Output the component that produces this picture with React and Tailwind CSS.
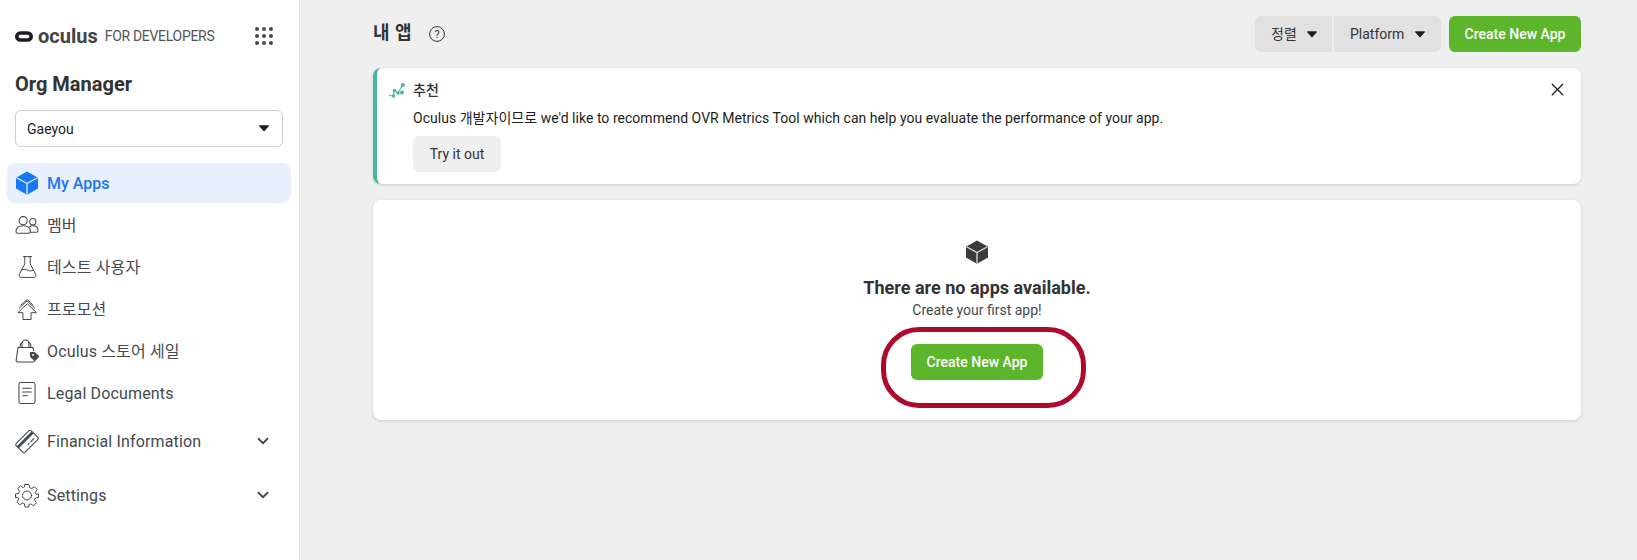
import React from "react";
import { ChevronDown, X } from "lucide-react";

const Caret = ({ className = "" }) => (
  <svg width="12" height="7" viewBox="0 0 12 7" className={className}>
    <path d="M1 .9C1 .5 1.300.3 1.600.3h8.800c.3 0 .6.2.6.6 0 .2-.1.3-.2.4L6.500 6.100c-.3.3-.7.3-1 0L1.200 1.300C1.100 1.200 1 1.100 1 .9z" fill="#1c1e21" />
  </svg>
);

const Cube = ({ color, line = "#fff", size = 24 }) => (
  <svg width={size} height={size} viewBox="0 0 24 24">
    <path d="M12 .5 22.600 6.400c.3.2.4.4.4.7v10c0 .3-.1.5-.4.7L12 23.800 1.400 17.800c-.3-.2-.4-.4-.4-.7v-10c0-.3.1-.5.4-.7z" fill={color} />
    <path d="M1.500 6.700 12 12.500l10.500-5.800M12 12.500v11" fill="none" stroke={line} strokeWidth="1.300" />
  </svg>
);

const stroke = { fill: "none", stroke: "#444950", strokeWidth: 1.1, strokeLinejoin: "round", strokeLinecap: "round" };

const Members = () => (
  <svg width="25" height="20" viewBox="0 0 25 20" {...stroke}>
    <circle cx="8.500" cy="5.500" r="4.200" />
    <path d="M1 17c0-4 3-6.200 7.500-6.200S16 13 16 17c0 1-.8 1.600-1.800 1.600H2.800C1.800 18.600 1 18 1 17z" />
    <circle cx="18.500" cy="6.500" r="3.200" />
    <path d="M15.500 11.500c.9-.5 2-.8 3-.8 3.200 0 5.500 2 5.500 5 0 1.200-.8 1.800-1.800 1.800h-6" />
  </svg>
);

const Flask = () => (
  <svg width="19" height="24" viewBox="0 0 21 25" {...stroke}>
    <path d="M6 1h9M7.500 1v8L1.500 20.500C.6 22.500 1.600 24 3.500 24h14c1.900 0 2.900-1.500 2-3.500L13.500 9V1" />
    <path d="M4 16c2.500-1.500 4.500-1 6.500 0s4.500 1.200 6.500 0" />
  </svg>
);

const Promo = () => (
  <svg width="20" height="23" viewBox="0 0 22 24" {...stroke}>
    <path d="M11 6 1 15.500h5.500V23h9v-7.500H21z" />
    <path d="M2.500 10.500 11 2.500l8.500 8M4.500 7 11 1l6.500 6" />
  </svg>
);

const Bag = () => (
  <svg width="24" height="24" viewBox="0 0 24 24" {...stroke}>
    <path d="M3 8.500 1.200 21c-.1 1.200.5 2 1.600 2H18c1 0 1.600-.7 1.600-1.600l-.2-3M3 8.500h15l.5 3" />
    <path d="M7 8.500V5c0-2.400 1.500-4 3.500-4s3.500 1.600 3.500 4v3.500M5 8.500c0-3 1-4.500 2.500-5M16 8.500c0-3-.6-4.500-2-5" />
    <path d="M15.500 13.500h3.500l4.300 3.400c.3.300.3.700 0 1l-3 3.300c-.3.300-.7.300-1 0l-3.800-3.700z" fill="#444950" />
    <circle cx="18" cy="16" r=".9" fill="#fff" stroke="none" />
  </svg>
);

const Doc = () => (
  <svg width="18" height="24" viewBox="0 0 19 24" {...stroke}>
    <rect x="1" y="1" width="17" height="22" rx="2" />
    <path d="M5 7h9M5 11h9M5 15h5" />
  </svg>
);

const Card = () => (
  <svg width="25" height="25" viewBox="0 0 25 25" {...stroke}>
    <g transform="rotate(-45 12.500 12.500)">
      <rect x="1.500" y="6" width="22" height="13" rx="1.800" />
      <rect x="1.500" y="8.500" width="22" height="3" fill="#444950" stroke="none" />
      <path d="M15 15.500h5M11 15.500h1.500" />
    </g>
  </svg>
);

const Gear = () => (
  <svg width="25" height="25" viewBox="0 0 24 24" {...stroke} strokeWidth="1">
    <circle cx="12" cy="12" r="4.500" />
    <path d="M10 1h4l.7 3.200 1.900.8 2.800-1.800 2.800 2.800-1.800 2.800.8 1.900L23.500 10.500v3.500l-3.200.7-.8 1.900 1.800 2.800-2.800 2.800-2.800-1.800-1.900.8L13.900 23.500h-3.800l-.7-3.200-1.900-.8-2.800 1.800-2.800-2.800 1.800-2.800-.8-1.900L.5 14v-3.500l3.200-.7.800-1.900L2.700 5.100l2.800-2.800 2.800 1.800 1-.5z" />
  </svg>
);

const Metric = () => (
  <svg width="16" height="15" viewBox="0 0 16 15">
    <path d="M0 12.500 4 13l1.500-5L9 10l4.500-8" fill="none" stroke="#45b8a0" strokeWidth="1.100" />
    <circle cx="13.800" cy="2" r="2" fill="#45b8a0" />
    <circle cx="13" cy="9.500" r="2" fill="#45b8a0" />
    <circle cx="9" cy="10" r="1.800" fill="#45b8a0" />
    <circle cx="5.500" cy="7.500" r="1.800" fill="#45b8a0" />
    <circle cx="4.500" cy="13" r="1.700" fill="#45b8a0" />
  </svg>
);

const NavRow = ({ icon, label, className = "" }) => (
  <div className={`flex items-center h-[42px] pl-[8px] ${className}`}>
    <div className="w-[24px] flex justify-center shrink-0">{icon}</div>
    <span className="ml-[8px] mt-[2px] text-[16px] tracking-[0.15px] text-[#444950]">{label}</span>
  </div>
);

const GreenButton = () => (
  <button className="h-[36px] w-[132px] pt-[1px] rounded-[6px] bg-[#5cb52a] text-white text-[14px] font-medium">Create New App</button>
);

export default function App() {
  const dots = [0, 1, 2, 3, 4, 5, 6, 7, 8];

  return (
    <div className="flex h-[560px] bg-[#efefef] overflow-hidden font-['Roboto','Noto_Sans_CJK_KR',sans-serif] text-[#333]">
      <aside className="w-[300px] shrink-0 bg-white border-r border-[#e4e4e4] px-[7px]">
        <div className="flex items-center justify-between h-[72px] pl-[8px] pr-[19px]">
          <div className="flex items-center">
            <svg width="18" height="11" viewBox="0 0 18 11" className="mr-[5px]">
              <rect x="1.800" y="2" width="14.400" height="7" rx="3.500" fill="none" stroke="#1c1e21" strokeWidth="3.600" />
            </svg>
            <span className="text-[20px] font-bold leading-none text-[#444]">oculus</span>
            <span className="ml-[7px] text-[14px] leading-none text-[#555] tracking-[-0.3px]">FOR DEVELOPERS</span>
          </div>
          <div className="grid grid-cols-3 gap-[3px]">
            {dots.map((d) => (
              <div key={d} className="w-[4px] h-[4px] rounded-full bg-[#444950]" />
            ))}
          </div>
        </div>
        <h2 className="pl-[8px] text-[20px] leading-[24px] font-bold text-[#333]">Org Manager</h2>
        <div className="mx-[8px] mt-[14px] h-[37px] w-[268px] rounded-[6px] border border-[#ccd0d5] flex items-center justify-between pl-[11px] pr-[12px] text-[14px] text-[#1c1e21]">
          <span className="mt-[1px]">Gaeyou</span>
          <Caret />
        </div>
        <div className="mt-[16px] h-[40px] w-[284px] rounded-[8px] bg-[#e7f0fc] flex items-center pl-[8px]">
          <Cube color="#1877f2" line="#e7f0fc" size={24} />
          <span className="ml-[8px] mt-[2px] text-[16px] font-medium text-[#1877f2]">My Apps</span>
        </div>
        <div className="mt-[1px]">
          <NavRow icon={<Members />} label="멤버" />
          <NavRow icon={<Flask />} label="테스트 사용자" />
          <NavRow icon={<Promo />} label="프로모션" />
          <NavRow icon={<Bag />} label="Oculus 스토어 세일" />
          <NavRow icon={<Doc />} label="Legal Documents" />
        </div>
        <div className="mt-[6px] flex items-center justify-between pr-[20px]">
          <NavRow icon={<Card />} label="Financial Information" />
          <ChevronDown size={18} strokeWidth={2.4} color="#444950" />
        </div>
        <div className="mt-[12px] flex items-center justify-between pr-[20px]">
          <NavRow icon={<Gear />} label="Settings" />
          <ChevronDown size={18} strokeWidth={2.4} color="#444950" />
        </div>
      </aside>

      <main className="flex-1 pl-[73px] pr-[56px] pt-[16px]">
        <div className="flex items-center justify-between h-[36px]">
          <div className="flex items-center">
            <h1 className="text-[18px] font-bold text-[#333] tracking-[0.5px] mt-[-4px]">내 앱</h1>
            <svg width="16" height="16" viewBox="0 0 16 16" className="ml-[17px]">
              <circle cx="8" cy="8" r="7.400" fill="none" stroke="#333" strokeWidth="1" />
              <text x="8" y="12" textAnchor="middle" fontSize="11" fill="#333">?</text>
            </svg>
          </div>
          <div className="flex items-center">
            <div className="flex h-[36px] w-[186px] gap-[2px] text-[14px] text-[#333]">
              <div className="w-[77px] bg-[#e1e1e1] rounded-l-[6px] flex items-center pl-[16px] gap-[9px]">
                정렬 <Caret />
              </div>
              <div className="flex-1 bg-[#e1e1e1] rounded-r-[6px] flex items-center pl-[16px] gap-[10px]">
                Platform <Caret />
              </div>
            </div>
            <div className="ml-[8px]">
              <GreenButton />
            </div>
          </div>
        </div>

        <div className="relative mt-[16px] h-[116px] rounded-[8px] bg-white shadow-[0_1px_3px_rgba(0,0,0,0.15)] border-l-4 border-[#45b8a0] pl-[12px] pt-[12px]">
          <div className="flex items-center h-[20px] text-[14px] font-medium text-[#333]">
            <Metric />
            <span className="ml-[8px]">추천</span>
          </div>
          <p className="ml-[24px] mt-[8px] text-[14px] leading-[20px] tracking-[0.03px] text-[#1c1e21]">
            Oculus 개발자이므로 we'd like to recommend OVR Metrics Tool which can help you evaluate the performance of your app.
          </p>
          <button className="ml-[24px] mt-[8px] h-[36px] w-[88px] rounded-[6px] bg-[#efefef] text-[14px] text-[#333]">Try it out</button>
          <X size={21} strokeWidth={1.5} color="#1c1e21" className="absolute right-[13px] top-[11px]" />
        </div>

        <div className="relative mt-[16px] h-[220px] rounded-[8px] bg-white shadow-[0_1px_3px_rgba(0,0,0,0.15)] flex flex-col items-center pt-[40px]">
          <Cube color="#3c3c3c" line="#ddd" size={24} />
          <div className="mt-[12px] text-[18px] leading-[24px] font-bold text-[#333]">There are no apps available.</div>
          <div className="text-[14px] leading-[20px] text-[#444950]">Create your first app!</div>
          <div className="mt-[24px]">
            <GreenButton />
          </div>
          <div className="absolute left-[508px] top-[127px] w-[205px] h-[81px] rounded-[38px] border-[5px] border-[#ae0a2d]" />
        </div>
      </main>
    </div>
  );
}
